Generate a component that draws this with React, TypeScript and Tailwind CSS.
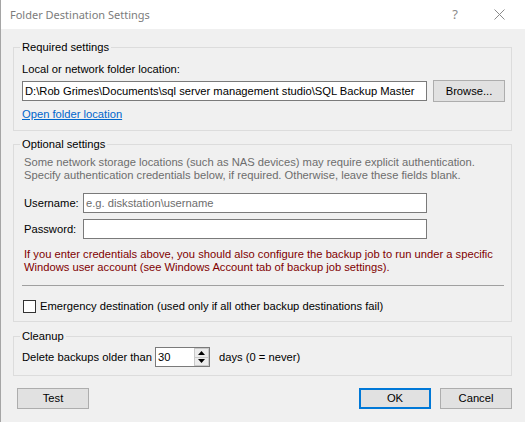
import React from "react";

// WinForms-style dialog for choosing where backups are written
const Button = ({ label, primary = false, h = "h-[21px]" }: { label: string; primary?: boolean; h?: string }) => (
  <button
    className={`w-[72px] ${h} bg-[#e1e1e1] text-black text-[11.2px] leading-[13px] ${
      primary ? "border-2 border-[#0078d7]" : "border border-[#adadad]"
    }`}
  >
    {label}
  </button>
);

const Spinner = () => (
  <div className="flex flex-col w-[15px] h-full">
    <div className="flex-1 flex items-center justify-center bg-[#ececec] border border-[#c9c9c9]">
      <svg width="7" height="4" viewBox="0 0 7 4">
        <path d="M0 4 L3.5 0 L7 4 Z" fill="#000" />
      </svg>
    </div>
    <div className="flex-1 flex items-center justify-center bg-[#ececec] border border-t-0 border-[#c9c9c9]">
      <svg width="7" height="4" viewBox="0 0 7 4">
        <path d="M0 0 L7 0 L3.5 4 Z" fill="#000" />
      </svg>
    </div>
  </div>
);

const App = () => {
  return (
    <div className="w-[525px] h-[422px] overflow-hidden bg-[#f0f0f0] border-l border-[#a5a5a5] text-black text-[11.2px] leading-[13px] font-['Liberation_Sans',Arial,sans-serif]">
      {/* title bar */}
      <div className="h-[29px] bg-white flex items-center pl-[9px]">
        <span className="font-['Noto_Sans',sans-serif] text-[11px] text-[#7c7c7c]">Folder Destination Settings</span>
        <span className="ml-auto font-['Noto_Sans',sans-serif] text-[13px] text-[#8a8a8a]">?</span>
        <svg className="ml-[36px] mr-[20px]" width="11" height="11" viewBox="0 0 11 11">
          <path d="M0.5 0.5 L10.5 10.5 M10.5 0.5 L0.5 10.5" stroke="#8a8a8a" strokeWidth="1" />
        </svg>
      </div>

      <div className="pl-[12px] pr-[13px] pt-[12px]">
        {/* required settings */}
        <fieldset className="border border-[#dcdcdc] p-0 m-0">
          <legend className="ml-[6px] px-[2px]">Required settings</legend>
          <div className="pl-[8px] pt-[9px] pb-[9px]">
            <div>Local or network folder location:</div>
            <div className="mt-[4px] flex items-center gap-[6px]">
              <div className="w-[405px] h-[20px] bg-white border border-[#7a7a7a] pl-[2px] flex items-center whitespace-nowrap overflow-hidden">
                D:\Rob Grimes\Documents\sql server management studio\SQL Backup Master
              </div>
              <Button label="Browse..." h="h-[22px]" />
            </div>
            <div className="mt-[6px] text-[#0066cc] underline">Open folder location</div>
          </div>
        </fieldset>

        {/* optional settings */}
        <fieldset className="mt-[7px] border border-[#dcdcdc] p-0 m-0">
          <legend className="ml-[6px] px-[2px]">Optional settings</legend>
          <div className="pl-[10px] pt-[5px] pb-[8px]">
            <p className="text-[#6d6d6d]">
              Some network storage locations (such as NAS devices) may require explicit authentication.
              <br />
              Specify authentication credentials below, if required. Otherwise, leave these fields blank.
            </p>
            <div className="mt-[11px] flex items-center">
              <span className="w-[59px]">Username:</span>
              <div className="w-[344px] h-[20px] bg-white border border-[#7a7a7a] pl-[2px] flex items-center text-[#6d6d6d]">
                e.g. diskstation\username
              </div>
            </div>
            <div className="mt-[6px] flex items-center">
              <span className="w-[59px]">Password:</span>
              <div className="w-[344px] h-[20px] bg-white border border-[#7a7a7a]" />
            </div>
            <p className="mt-[9px] text-[#800000] whitespace-nowrap">
              If you enter credentials above, you should also configure the backup job to run under a specific
              <br />
              Windows user account (see Windows Account tab of backup job settings).
            </p>
            <div className="mt-[11px] ml-[-2px] w-[482px] h-px bg-[#a0a0a0]" />
            <div className="mt-[14px] ml-[-1px] flex items-center gap-[4px]">
              <div className="w-[13px] h-[13px] bg-white border border-[#333333]" />
              <span>Emergency destination (used only if all other backup destinations fail)</span>
            </div>
          </div>
        </fieldset>

        {/* cleanup */}
        <fieldset className="mt-[8px] border border-[#dcdcdc] p-0 m-0">
          <legend className="ml-[6px] px-[2px]">Cleanup</legend>
          <div className="pl-[8px] pt-[4px] pb-[8px] flex items-center">
            <span className="w-[133px]">Delete backups older than</span>
            <div className="w-[55px] h-[20px] bg-white border border-[#7a7a7a] flex items-stretch">
              <span className="flex-1 pl-[2px] flex items-center">30</span>
              <Spinner />
            </div>
            <span className="ml-[9px]">days (0 = never)</span>
          </div>
        </fieldset>

        {/* dialog buttons */}
        <div className="mt-[12px] flex items-center">
          <div className="ml-[4px]">
            <Button label="Test" />
          </div>
          <div className="ml-auto flex gap-[9px]">
            <Button label="OK" primary />
            <Button label="Cancel" />
          </div>
        </div>
      </div>
    </div>
  );
};

export default App;
